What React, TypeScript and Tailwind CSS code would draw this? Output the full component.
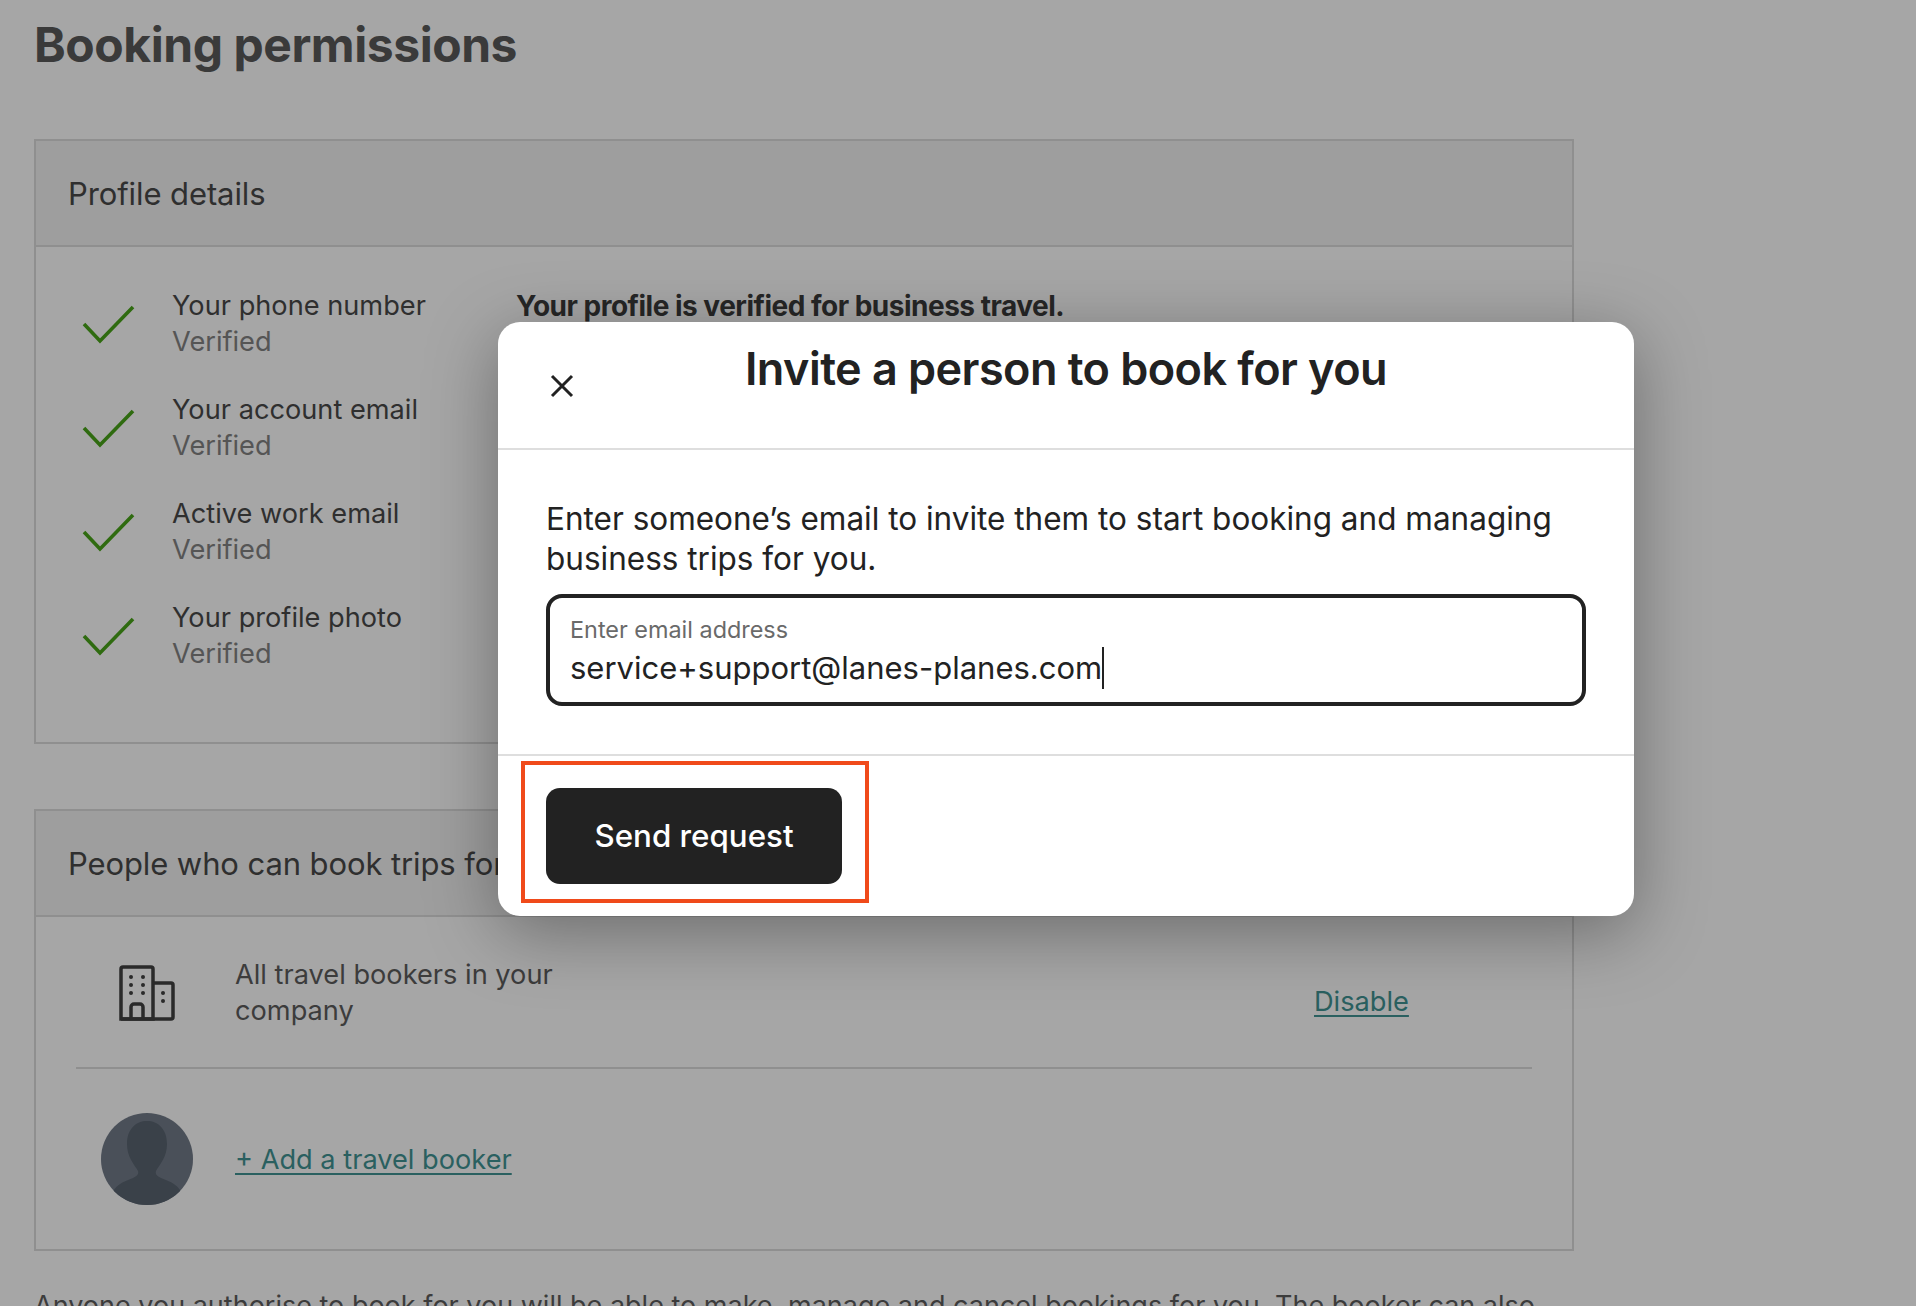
const CHECKS = ['Your phone number', 'Your account email', 'Active work email', 'Your profile photo'];

function Check() {
  return (
    <svg width="54" height="40" viewBox="0 0 54 40" fill="none" className="shrink-0">
      <path d="M2 20 L18 37 L51 3" stroke="#2f6b10" strokeWidth="3.6" />
    </svg>
  );
}

function BuildingIcon() {
  return (
    <svg width="56" height="56" viewBox="0 0 56 56" fill="none" className="shrink-0">
      <path d="M2 54 V4 a2 2 0 0 1 2-2 H32 a2 2 0 0 1 2 2 V54 Z" stroke="#2a2a2a" strokeWidth="3.5" />
      <path d="M34 18 H52 a2 2 0 0 1 2 2 V52 a2 2 0 0 1-2 2 H2" stroke="#2a2a2a" strokeWidth="3.5" />
      <path d="M12 54 V42 a3 3 0 0 1 3-3 H21 a3 3 0 0 1 3 3 V54" stroke="#2a2a2a" strokeWidth="3.5" />
      {[12, 24].map(cx => [12, 20, 28].map(cy => <circle key={`${cx}-${cy}`} cx={cx} cy={cy} r="2" fill="#2a2a2a" />))}
      <circle cx="44" cy="28" r="2" fill="#2a2a2a" />
      <circle cx="44" cy="36" r="2" fill="#2a2a2a" />
    </svg>
  );
}

function Avatar() {
  return (
    <svg width="92" height="92" viewBox="0 0 92 92" className="shrink-0">
      <defs>
        <clipPath id="avatar-clip"><circle cx="46" cy="46" r="46" /></clipPath>
      </defs>
      <circle cx="46" cy="46" r="46" fill="#4a5059" />
      <g clipPath="url(#avatar-clip)" fill="#3a4149">
        <path d="M46 8 C35 8 26 16 26 31 C26 44 33 51 37 58 C38 61 36 63 32 65 C22 69 13 72 10 84 L10 92 H82 V84 C79 72 70 69 60 65 C56 63 54 61 55 58 C59 51 66 44 66 31 C66 16 57 8 46 8 Z" />
      </g>
    </svg>
  );
}

export default function App() {
  return (
    <div className="relative h-[1306px] w-full overflow-hidden bg-[#a6a6a6] font-['Inter',sans-serif] text-[#2f2f2f]">
      <div className="w-[1540px] ml-[34px]">
        <h1 className="pt-[16px] h-[139px] text-[48px] leading-[58px] font-bold tracking-[-0.45px] text-[#3a3a3a]">
          Booking permissions
        </h1>

        {/* Profile details */}
        <section className="h-[605px] border-2 border-[#8f8f8f]">
          <div className="h-[106px] flex items-center px-[32px] pt-[2px] bg-[#9e9e9e] border-b-2 border-[#8f8f8f] text-[31px] tracking-[-0.1px]">
            Profile details
          </div>
          <div className="flex pt-[41px] pl-[46px]">
            <div className="w-[434px] flex flex-col gap-[32px]">
              {CHECKS.map(c => (
                <div key={c} className="flex items-center gap-[36px]">
                  <Check />
                  <div className="text-[27.2px] leading-[36px]">
                    <div>{c}</div>
                    <div className="text-[#555]">Verified</div>
                  </div>
                </div>
              ))}
            </div>
            <div className="text-[28px] leading-[36px] font-bold tracking-[-0.5px] text-[#262626]">
              Your profile is verified for business travel.
            </div>
          </div>
        </section>

        {/* People */}
        <section className="mt-[65px] h-[442px] border-2 border-[#8f8f8f]">
          <div className="h-[106px] flex items-center px-[32px] pt-[2px] bg-[#9e9e9e] border-b-2 border-[#8f8f8f] text-[31px] tracking-[-0.1px]">
            People who can book trips for you
          </div>
          <div className="mx-[40px] h-[152px] flex items-center border-b-2 border-[#8f8f8f]">
            <div className="w-[159px] pl-[43px] pt-[2px]"><BuildingIcon /></div>
            <div className="w-[340px] pt-[2px] text-[27.2px] leading-[36px] text-[#3c3c3c]">All travel bookers in your company</div>
            <a className="ml-[739px] mt-[20px] text-[27.2px] text-[#2a6060] underline underline-offset-4">Disable</a>
          </div>
          <div className="flex items-center mx-[40px] pt-[44px]">
            <div className="w-[159px] pl-[25px]"><Avatar /></div>
            <a className="pt-[2px] text-[27.2px] text-[#2a6060] underline underline-offset-4">+ Add a travel booker</a>
          </div>
        </section>

        <p className="mt-[37px] w-[1540px] text-[27px] leading-[36px] text-[#3c3c3c]">
          Anyone you authorise to book for you will be able to make, manage and cancel bookings for you. The booker can also
        </p>
      </div>

      {/* Invite dialog */}
      <div className="absolute left-[498px] top-[322px] w-[1136px] h-[594px] rounded-[22px] bg-white text-[#222] shadow-[0_16px_70px_rgba(0,0,0,0.35)]">
        <div className="relative h-[128px] border-b-2 border-[#dedede] pt-[18px] text-center text-[45px] leading-[58px] font-semibold tracking-[-0.55px]">
          Invite a person to book for you
          <svg width="24" height="24" viewBox="0 0 24 24" fill="none" className="absolute left-[52px] top-[52px]">
            <path d="M2 2 L22 22 M22 2 L2 22" stroke="#222" strokeWidth="3" />
          </svg>
        </div>
        <div className="h-[306px] px-[48px] pt-[49px] border-b-2 border-[#dedede]">
          <p className="text-[31.5px] leading-[40px]">
            Enter someone’s email to invite them to start booking and managing business trips for you.
          </p>
          <div className="mt-[15px] w-[1040px] h-[112px] rounded-[16px] border-4 border-[#222] px-[20px] pt-[17px]">
            <div className="text-[23.4px] leading-[30px] text-[#6a6a6a]">Enter email address</div>
            <div className="flex items-center text-[31px] leading-[46px]">
              service+support@lanes-planes.com
              <span className="w-[2px] h-[42px] bg-[#222]" />
            </div>
          </div>
        </div>
        <div className="pl-[23px] pt-[5px]">
          <div className="w-[348px] h-[142px] border-4 border-[#f04a1a] pl-[21px] pt-[23px]">
            <button className="w-[296px] h-[96px] rounded-[14px] bg-[#222] text-white text-[31.3px] font-medium">
              Send request
            </button>
          </div>
        </div>
      </div>
    </div>
  );
}
